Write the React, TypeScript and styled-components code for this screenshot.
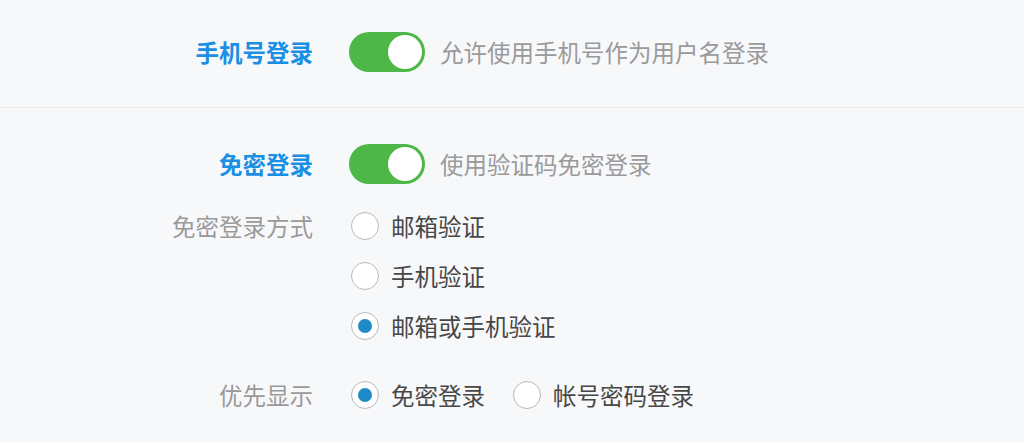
import { useState } from "react";
import styled, { createGlobalStyle } from "styled-components";

const GlobalStyle = createGlobalStyle`
  html, body {
    margin: 0;
    padding: 0;
    background: #f7f8fa;
  }
  body {
    font-family: "Noto Sans CJK SC", "Noto Sans", sans-serif;
  }
`;

const Page = styled.div`
  width: 1024px;
  height: 442px;
  overflow: hidden;
  background: #f7f8fa;
`;

const Section = styled.section<{ $top: number; $bottom: number; $divider?: boolean }>`
  display: flex;
  flex-direction: column;
  gap: 17px;
  padding: ${(p) => p.$top}px 0 ${(p) => p.$bottom}px;
  border-bottom: ${(p) => (p.$divider ? "1px solid #ebebeb" : "none")};
`;

const Row = styled.div<{ $push?: number }>`
  display: grid;
  grid-template-columns: 313px 1fr;
  column-gap: 36px;
  align-items: start;
  margin-top: ${(p) => p.$push ?? 0}px;
`;

const Label = styled.div<{ $strong?: boolean; $h: number }>`
  text-align: right;
  font-size: 23.5px;
  line-height: ${(p) => p.$h}px;
  height: ${(p) => p.$h}px;
  color: ${(p) => (p.$strong ? "#1a8fe3" : "#9a9a9a")};
  font-weight: ${(p) => (p.$strong ? 700 : 400)};
  white-space: nowrap;
`;

const SwitchLine = styled.div`
  display: flex;
  align-items: center;
  gap: 15px;
  height: 40px;
`;

const Track = styled.button<{ $on: boolean }>`
  position: relative;
  width: 76px;
  height: 40px;
  border: none;
  padding: 0;
  border-radius: 20px;
  background: ${(p) => (p.$on ? "#4db848" : "#d6d6d6")};
  cursor: pointer;
  flex: none;
`;

const Knob = styled.span<{ $on: boolean }>`
  position: absolute;
  top: 3px;
  left: ${(p) => (p.$on ? "39px" : "3px")};
  width: 34px;
  height: 34px;
  border-radius: 50%;
  background: #fff;
  transition: left 0.2s;
`;

const Hint = styled.span`
  font-size: 23.5px;
  color: #9a9a9a;
  white-space: nowrap;
`;

const OptionColumn = styled.div`
  display: flex;
  flex-direction: column;
`;

const OptionLine = styled.div`
  display: flex;
  align-items: center;
  height: 50px;
  gap: 26px;
`;

const Option = styled.label`
  display: flex;
  align-items: center;
  gap: 12px;
  cursor: pointer;
  font-size: 23.5px;
  color: #474747;
  white-space: nowrap;
`;

const Circle = styled.span<{ $checked: boolean }>`
  position: relative;
  box-sizing: border-box;
  width: 28px;
  height: 28px;
  margin-left: 2px;
  border-radius: 50%;
  border: 1.5px solid #b9b9b9;
  background: #fff;
  flex: none;

  &::after {
    content: "";
    position: absolute;
    left: 50%;
    top: 50%;
    width: 14px;
    height: 14px;
    margin: -7px 0 0 -7px;
    border-radius: 50%;
    background: #1e8ac6;
    display: ${(p) => (p.$checked ? "block" : "none")};
  }
`;

const Toggle = ({ on, onClick, hint }: { on: boolean; onClick: () => void; hint: string }) => (
  <SwitchLine>
    <Track $on={on} onClick={onClick} aria-pressed={on}>
      <Knob $on={on} />
    </Track>
    <Hint>{hint}</Hint>
  </SwitchLine>
);

const Radio = ({ text, checked, onSelect }: { text: string; checked: boolean; onSelect: () => void }) => (
  <Option onClick={onSelect}>
    <Circle $checked={checked} />
    {text}
  </Option>
);

const methods = ["邮箱验证", "手机验证", "邮箱或手机验证"];
const firstShow = ["免密登录", "帐号密码登录"];

const App = () => {
  const [phoneLogin, setPhoneLogin] = useState(true);
  const [noPwd, setNoPwd] = useState(true);
  const [method, setMethod] = useState(2);
  const [prefer, setPrefer] = useState(0);

  return (
    <Page>
      <GlobalStyle />
      <Section $top={32} $bottom={35} $divider>
        <Row>
          <Label $strong $h={40}>手机号登录</Label>
          <Toggle on={phoneLogin} onClick={() => setPhoneLogin(!phoneLogin)} hint="允许使用手机号作为用户名登录" />
        </Row>
      </Section>
      <Section $top={36} $bottom={0}>
        <Row>
          <Label $strong $h={40}>免密登录</Label>
          <Toggle on={noPwd} onClick={() => setNoPwd(!noPwd)} hint="使用验证码免密登录" />
        </Row>
        <Row>
          <Label $h={50}>免密登录方式</Label>
          <OptionColumn>
            {methods.map((m, i) => (
              <OptionLine key={m}>
                <Radio text={m} checked={method === i} onSelect={() => setMethod(i)} />
              </OptionLine>
            ))}
          </OptionColumn>
        </Row>
        <Row $push={2}>
          <Label $h={50}>优先显示</Label>
          <OptionLine>
            {firstShow.map((f, i) => (
              <Radio key={f} text={f} checked={prefer === i} onSelect={() => setPrefer(i)} />
            ))}
          </OptionLine>
        </Row>
      </Section>
    </Page>
  );
};

export default App;
